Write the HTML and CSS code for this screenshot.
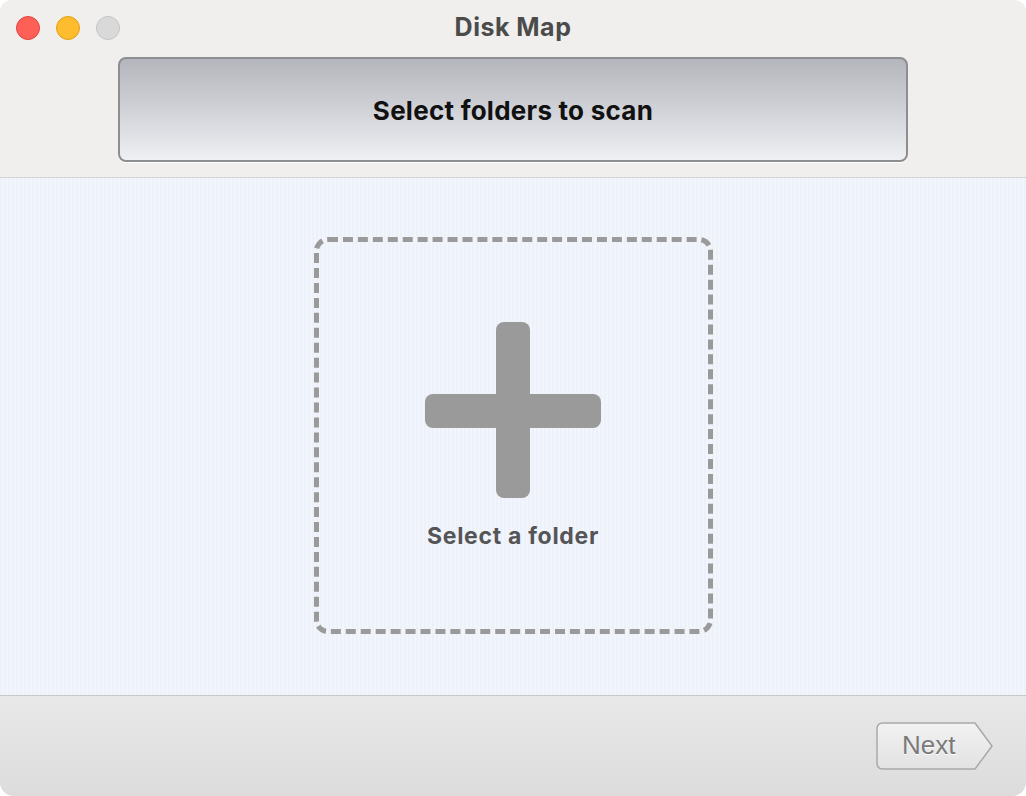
FILE: index.html
```html
<!DOCTYPE html>
<html>
<head>
<meta charset="utf-8">
<link rel="stylesheet" href="styles.css">
</head>
<body>
<div class="window">
  <header class="top">
    <div class="titlebar">
      <div class="lights">
        <span class="light red"></span>
        <span class="light yellow"></span>
        <span class="light gray"></span>
      </div>
      <div class="title">Disk Map</div>
    </div>
    <div class="banner">Select folders to scan</div>
  </header>
  <main class="content">
    <div class="dropzone">
      <div class="plus">
        <span class="bar v"></span>
        <span class="bar h"></span>
      </div>
      <div class="drop-label">Select a folder</div>
    </div>
  </main>
  <footer class="bottom">
    <div class="next">
      <svg class="next-shape" width="118" height="48" viewBox="0 0 118 48">
        <defs>
          <linearGradient id="ng" x1="0" y1="0" x2="0" y2="1">
            <stop offset="0" stop-color="#f2f2f2"/>
            <stop offset="1" stop-color="#e2e2e2"/>
          </linearGradient>
        </defs>
        <path d="M7 1 H99 L116 24 L99 47 H7 Q1 47 1 41 V7 Q1 1 7 1 Z" fill="url(#ng)" stroke="#a9a9a9" stroke-width="1.5" stroke-linejoin="round"/>
      </svg>
      <span class="next-label">Next</span>
    </div>
  </footer>
</div>
</body>
</html>
```
FILE: styles.css
```css
* { box-sizing: border-box; }
html, body { margin: 0; padding: 0; background: #ffffff; }
body {
  width: 1026px;
  height: 796px;
  font-family: Inter, "Open Sans", "Liberation Sans", sans-serif;
}
.window {
  width: 1026px;
  height: 796px;
  border-radius: 12px 12px 14px 14px;
  overflow: hidden;
  display: flex;
  flex-direction: column;
  background: #f0efed;
}
.top {
  height: 178px;
  background: #f0efed;
  border-bottom: 1px solid #d4d4d4;
  display: flex;
  flex-direction: column;
}
.titlebar {
  height: 57px;
  display: flex;
  align-items: flex-start;
  padding-top: 16px;
  padding-left: 16px;
  position: relative;
}
.lights { display: flex; gap: 16px; }
.light {
  width: 24px;
  height: 24px;
  border-radius: 50%;
  display: block;
}
.light.red { background: #fe5f57; border: 1px solid #e2463f; }
.light.yellow { background: #febc2e; border: 1px solid #e1a116; }
.light.gray { background: #d9d9d9; border: 1px solid #c4c4c4; }
.title {
  position: absolute;
  left: 0;
  right: 0;
  top: 12px;
  text-align: center;
  font-size: 25px;
  font-weight: 700;
  color: #4b4b4b;
  letter-spacing: 0.5px;
}
.banner {
  margin-left: 118px;
  width: 790px;
  height: 105px;
  border: 2px solid #8d8e92;
  border-radius: 8px;
  background: linear-gradient(to bottom, #b4b6bd 0%, #cdcfd4 45%, #eef0f4 100%);
  box-shadow: 0 1px 0 #ffffff;
  display: flex;
  align-items: center;
  justify-content: center;
  font-size: 26px;
  font-weight: 700;
  color: #111111;
  letter-spacing: 0.25px;
  padding-top: 2px;
}
.content {
  height: 518px;
  background: repeating-linear-gradient(90deg, #edf1fa 0 2px, #f3f5fd 2px 4px);
  border-bottom: 1px solid #c9c9c9;
  display: flex;
  justify-content: center;
  padding-top: 59px;
  padding-left: 0;
}
.dropzone {
  width: 399px;
  height: 397px;
  border: 5px dashed #9a9a9b;
  border-radius: 14px;
  display: flex;
  flex-direction: column;
  align-items: center;
  padding-top: 80px;
}
.plus {
  position: relative;
  width: 176px;
  height: 176px;
}
.bar {
  position: absolute;
  background: #9a9a9a;
  border-radius: 8px;
}
.bar.v { left: 71px; top: 0; width: 34px; height: 176px; }
.bar.h { left: 0; top: 72px; width: 176px; height: 34px; }
.drop-label {
  margin-top: 24px;
  font-size: 23px;
  font-weight: 700;
  color: #555558;
  letter-spacing: 0.7px;
}
.bottom {
  flex: 1;
  background: linear-gradient(to bottom, #e8e8e8 0%, #dcdcdc 100%);
  display: flex;
  justify-content: flex-end;
  align-items: flex-start;
  padding-top: 26px;
  padding-right: 32px;
}
.next {
  position: relative;
  width: 118px;
  height: 48px;
  display: flex;
  align-items: center;
  padding-left: 26px;
}
.next-shape { position: absolute; left: 0; top: 0; }
.next-label {
  position: relative;
  font-size: 26px;
  color: #7a7a7a;
  font-family: "Liberation Sans", Arial, sans-serif;
  text-shadow: 0 1px 0 #ffffff;
  margin-top: -2px;
}
```
